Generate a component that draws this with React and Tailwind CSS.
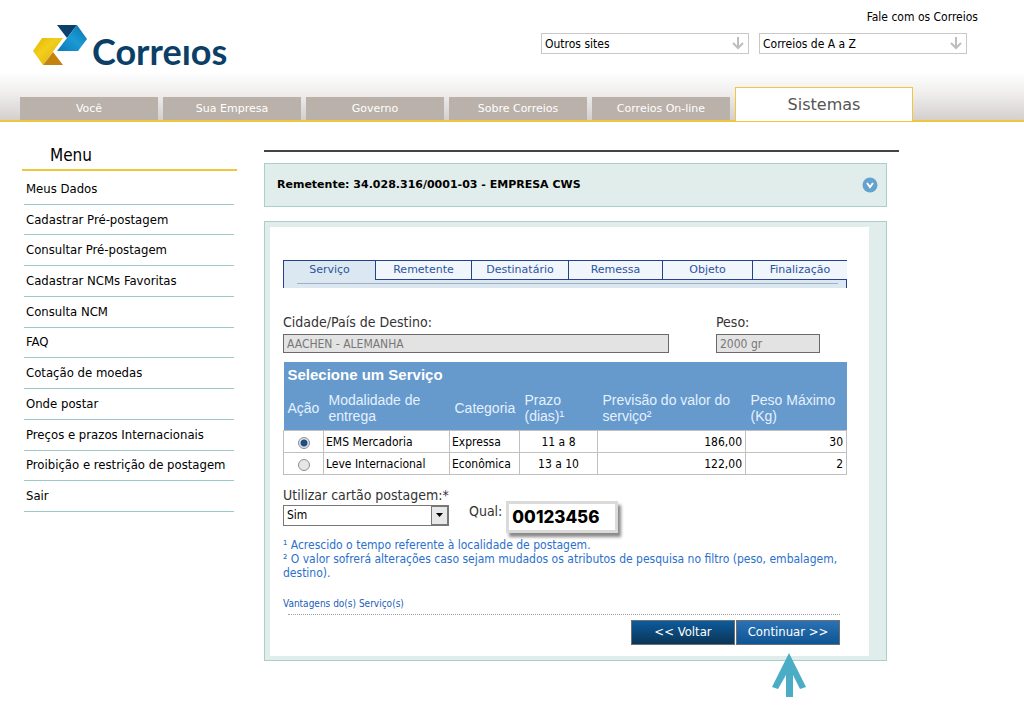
import React, { useState } from 'react';

const navItems = ['Você', 'Sua Empresa', 'Governo', 'Sobre Correios', 'Correios On-line'];

const menuItems = [
  'Meus Dados',
  'Cadastrar Pré-postagem',
  'Consultar Pré-postagem',
  'Cadastrar NCMs Favoritas',
  'Consulta NCM',
  'FAQ',
  'Cotação de moedas',
  'Onde postar',
  'Preços e prazos Internacionais',
  'Proibição e restrição de postagem',
  'Sair'
];

const steps = [
  { name: 'Remetente', width: 'w-[96px]' },
  { name: 'Destinatário', width: 'w-[97px]' },
  { name: 'Remessa', width: 'w-[94px]' },
  { name: 'Objeto', width: 'w-[90px]' },
  { name: 'Finalização', width: 'flex-1' }
];

const services = [
  { id: 'ems', name: 'EMS Mercadoria', category: 'Expressa', days: '11 a 8', price: '186,00', maxWeight: '30' },
  { id: 'leve', name: 'Leve Internacional', category: 'Econômica', days: '13 a 10', price: '122,00', maxWeight: '2' }
];

const Logo = () => (
  <a href="#" className="flex items-start gap-1 text-[#0b3f68]" aria-label="Correios">
    <svg width="55" height="42" viewBox="0 0 55 42" aria-hidden="true">
      <defs>
        <linearGradient id="logoYellow" x1="0" y1="0" x2="1" y2="1">
          <stop offset="0" stopColor="#e0b400" />
          <stop offset="0.4" stopColor="#f2cf1c" />
          <stop offset="1" stopColor="#dba80a" />
        </linearGradient>
        <linearGradient id="logoBlue" x1="1" y1="0" x2="0" y2="1">
          <stop offset="0" stopColor="#0a6fa6" />
          <stop offset="0.5" stopColor="#1a9ad6" />
          <stop offset="1" stopColor="#0f79b5" />
        </linearGradient>
      </defs>
      <path d="M24 1H44L34 14Z" fill="#0d3f6b" />
      <path d="M44 1L54 15 45 27H24L34 14Z" fill="url(#logoBlue)" />
      <path d="M9 14H30L10 41 0 27Z" fill="url(#logoYellow)" />
      <path d="M20 28L30 41H10Z" fill="#c4820e" />
    </svg>
    <span className="pt-[6px] font-['Lato',sans-serif] text-[36px] font-bold leading-[42px]">Correıos</span>
  </a>
);

const SiteSelect = ({ label }) => (
  <div className="relative">
    <select
      aria-label={label}
      className="block h-[21px] w-[208px] appearance-none border border-[#c8c8c8] bg-white px-[3px] text-[12px] leading-[18px] text-black"
    >
      <option>{label}</option>
    </select>
    <svg className="pointer-events-none absolute right-[5px] top-1" width="12" height="13" viewBox="0 0 12 13" fill="none" stroke="#bdbdbd" strokeWidth="2">
      <path d="M6 0v11M1 6l5 5 5-5" />
    </svg>
  </div>
);

const Header = () => (
  <header className="border-b-2 border-[#f0c63c] bg-[linear-gradient(to_bottom,#ffffff_60%,#efeeed_78%,#d3cfcd_100%)]">
    <div className="flex h-[87px] items-start justify-between pl-[33px]">
      <div className="pt-6">
        <Logo />
      </div>
      <div className="flex flex-col items-end gap-2 pt-[9px]">
        <a href="#" className="mr-[46px] text-[12px] leading-4 text-black">Fale com os Correios</a>
        <div className="mr-[57px] flex gap-[10px]">
          <SiteSelect label="Outros sites" />
          <SiteSelect label="Correios de A a Z" />
        </div>
      </div>
    </div>
    <nav className="flex items-end gap-[5px] pl-5 font-['DejaVu_Sans',sans-serif]">
      {navItems.map(item => (
        <a
          key={item}
          href="#"
          className="h-[23px] w-[138px] bg-[#bab1aa] text-center text-[11px] leading-6 text-white"
        >
          {item}
        </a>
      ))}
      <a
        href="#"
        className="-mb-[2px] h-[35px] w-[178px] border border-[#f0c63c] bg-white text-center text-[16px] leading-[34px] text-[#555555]"
      >
        Sistemas
      </a>
    </nav>
  </header>
);

const Sidebar = () => (
  <aside className="w-[215px] shrink-0">
    <h2 className="border-b-2 border-[#f0c63c] pb-1 pl-7 text-[17px] leading-5">Menu</h2>
    <ul className="mt-[3px] mr-[3px] ml-[2px] grid h-[338px] auto-rows-fr">
      {menuItems.map(item => (
        <li key={item} className="flex items-center border-b border-[#9ac9c7] pl-[2px]">
          <a href="#" className="text-[13px] leading-4 text-black">{item}</a>
        </li>
      ))}
    </ul>
  </aside>
);

const Steps = () => (
  <nav>
    <div className="flex border-t border-l border-[#23418c] bg-[#dbe8f2] text-center font-['DejaVu_Sans',sans-serif] text-[11px] leading-[18px] text-[#2b559c]">
      <a href="#" className="w-[91px]">Serviço</a>
      {steps.map(step => (
        <a key={step.name} href="#" className={`border-b border-l border-[#23418c] bg-[#f0f6fc] ${step.width}`}>
          {step.name}
        </a>
      ))}
    </div>
    <div className="h-2 border-x border-[#23418c] bg-[#dbe8f2] pr-2 pl-[13px] pt-[3px]">
      <div className="h-px bg-[#a3afbd]"></div>
    </div>
  </nav>
);

const ServiceTable = ({ selected, onSelect }) => (
  <table className="w-full table-fixed border-collapse text-[12px] leading-4">
    <colgroup>
      <col className="w-[40px]" />
      <col className="w-[126px]" />
      <col className="w-[70px]" />
      <col className="w-[78px]" />
      <col className="w-[148px]" />
      <col />
    </colgroup>
    <thead className="bg-[#6699cc] text-left font-['Liberation_Sans',sans-serif] text-[14px] text-[#e4f1ff]">
      <tr className="h-[28px]">
        <th colSpan={6} className="px-1 pb-[3px] text-[15px] font-bold text-white">Selecione um Serviço</th>
      </tr>
      <tr className="h-[40px]">
        <th className="px-1 pb-[3px] font-normal">Ação</th>
        <th className="px-[5px] pb-[3px] font-normal">Modalidade de entrega</th>
        <th className="px-[5px] pb-[3px] font-normal">Categoria</th>
        <th className="px-[5px] pb-[3px] font-normal">Prazo (dias)¹</th>
        <th className="px-[5px] pb-[3px] font-normal">Previsão do valor do serviço²</th>
        <th className="px-[5px] pb-[3px] font-normal">Peso Máximo (Kg)</th>
      </tr>
    </thead>
    <tbody>
      {services.map(service => (
        <tr key={service.id} className="h-[22px]">
          <td className="border border-[#c0c0c0]">
            <input
              type="radio"
              name="servico"
              aria-label={service.name}
              checked={selected === service.id}
              onChange={() => onSelect(service.id)}
              className="mx-auto mt-[3px] block h-3 w-3 appearance-none rounded-full border border-[#8e8f8f] bg-[#e6e6e6] checked:bg-[radial-gradient(circle,#1d4f7c_0_3px,#dfe6ec_4px)]"
            />
          </td>
          <td className="border border-[#c0c0c0] px-[2px] pt-px">{service.name}</td>
          <td className="border border-[#c0c0c0] px-[2px] pt-px">{service.category}</td>
          <td className="border border-[#c0c0c0] pt-px text-center">{service.days}</td>
          <td className="border border-[#c0c0c0] px-[3px] pt-px text-right">{service.price}</td>
          <td className="border border-[#c0c0c0] px-[3px] pt-px text-right">{service.maxWeight}</td>
        </tr>
      ))}
    </tbody>
  </table>
);

const ServiceForm = () => {
  const [selected, setSelected] = useState('ems');
  const [card, setCard] = useState('00123456');

  return (
    <form className="bg-white pt-[33px] pr-[22px] pb-[11px] pl-[13px]" onSubmit={e => e.preventDefault()}>
      <Steps />

      {/* Destination */}
      <div className="mt-6 flex gap-[47px]">
        <div className="w-[386px]">
          <label htmlFor="destino" className="mb-[2px] block text-[14px] leading-5 text-[#333333]">Cidade/País de Destino:</label>
          <input id="destino" disabled defaultValue="AACHEN - ALEMANHA" className="block h-[19px] w-full border border-[#6a6a6a] bg-[#e3e3e3] px-[3px] text-[12px] text-[#777777]" />
        </div>
        <div className="w-[104px]">
          <label htmlFor="peso" className="mb-[2px] block text-[14px] leading-5 text-[#333333]">Peso:</label>
          <input id="peso" disabled defaultValue="2000 gr" className="block h-[19px] w-full border border-[#6a6a6a] bg-[#e3e3e3] px-[3px] text-[12px] text-[#777777]" />
        </div>
      </div>

      <div className="mt-[9px]">
        <ServiceTable selected={selected} onSelect={setSelected} />
      </div>

      {/* Postage card */}
      <div className="mt-[10px] flex gap-5">
        <div className="w-[166px]">
          <label htmlFor="cartao" className="block text-[14px] leading-5 whitespace-nowrap text-[#333333]">Utilizar cartão postagem:*</label>
          <div className="relative">
            <select id="cartao" className="block h-[21px] w-full appearance-none border border-[#777777] bg-white px-[3px] text-[12px] text-black">
              <option>Sim</option>
              <option>Não</option>
            </select>
            <span className="pointer-events-none absolute top-px right-px flex h-[19px] w-[17px] items-center justify-center border border-[#777777] bg-[#e8e8e8]">
              <svg width="7" height="4" viewBox="0 0 7 4"><path d="M0 0h7L3.5 4Z" fill="#000" /></svg>
            </span>
          </div>
        </div>
        <div className="flex gap-1 pt-4">
          <label htmlFor="numero" className="text-[14px] leading-5 text-[#333333]">Qual:</label>
          <input
            id="numero"
            value={card}
            onChange={e => setCard(e.target.value)}
            className="h-8 w-[112px] border-[3px] border-[#dadada] bg-white px-[3px] font-['Inter',sans-serif] text-[17px] font-extrabold text-black shadow-[3px_4px_3px_#8a8a8a]"
          />
        </div>
      </div>

      <p className="mt-[5px] text-[12px] leading-[14px] text-[#2a70cc]">
        ¹ Acrescido o tempo referente à localidade de postagem.
        <br />
        ² O valor sofrerá alterações caso sejam mudados os atributos de pesquisa no filtro (peso, embalagem, destino).
      </p>
      <a href="#" className="mt-4 block text-[10px] leading-4 text-[#2060b8]">Vantagens do(s) Serviço(s)</a>

      <div className="mt-[2px] mr-[7px] ml-[5px] border-t border-dotted border-[#a0a0a0]"></div>
      <div className="mt-[5px] mr-[7px] flex justify-end gap-px">
        <button type="button" className="block h-[25px] w-[104px] border border-[#6c7075] bg-linear-to-b from-[#0d5c9c] to-[#0a3557] text-[13px] text-white">
          &lt;&lt; Voltar
        </button>
        <div className="relative">
          <button type="submit" className="block h-[25px] w-[104px] border border-[#6c7075] bg-linear-to-b from-[#2a72b5] to-[#0f5594] text-[13px] text-white">
            Continuar &gt;&gt;
          </button>
          <svg className="absolute top-[33px] left-9" width="36" height="45" viewBox="0 0 36 45" fill="#4bacc6" aria-hidden="true">
            <path d="M17 0L34 34l-6 2-7-14v22h-7V22L6 36l-6-2Z" />
          </svg>
        </div>
      </div>
    </form>
  );
};

const App = () => {
  return (
    <div className="min-h-screen bg-white font-['DejaVu_Sans_Condensed','DejaVu_Sans',sans-serif] text-black">
      <Header />
      <div className="flex gap-[27px] pt-[23px] pl-[22px]">
        <Sidebar />
        <main className="max-w-[635px] flex-1 pt-[5px]">
          <div className="border-t-2 border-[#444444]"></div>
          <section className="mt-[11px] mr-3 flex h-11 items-center justify-between border border-[#a9cfcc] bg-[#e0edeb] pr-2 pl-3">
            <h1 className="font-['DejaVu_Sans',sans-serif] text-[11px] leading-4 font-bold">Remetente: 34.028.316/0001-03 - EMPRESA CWS</h1>
            <button type="button" aria-label="Expandir remetente">
              <svg width="16" height="16" viewBox="0 0 16 16">
                <circle cx="8" cy="8" r="7.5" fill="#64a2cf" />
                <path d="M5 6l3 4 3-4" fill="none" stroke="#fff" strokeWidth="2" />
              </svg>
            </button>
          </section>
          <section className="mt-[14px] mr-3 border border-[#a9cfcc] bg-[#e0edeb] pt-[5px] pr-[17px] pb-1 pl-[5px]">
            <ServiceForm />
          </section>
        </main>
      </div>
    </div>
  );
};

export default App;
